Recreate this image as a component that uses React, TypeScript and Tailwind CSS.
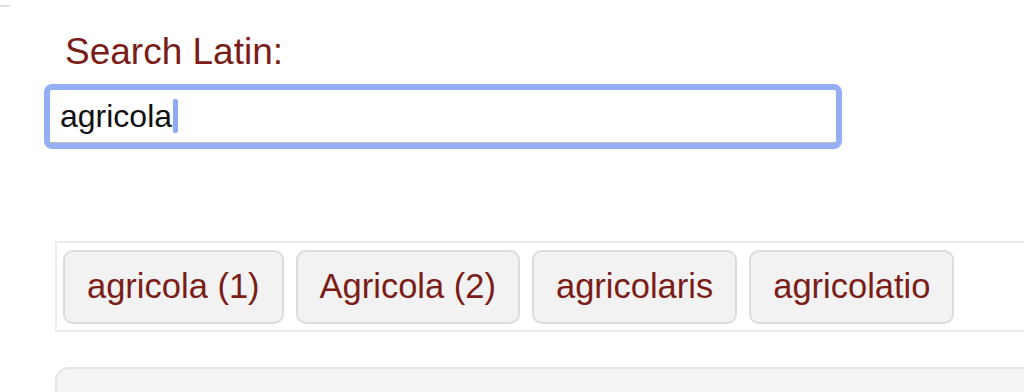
import React from "react";

export default function App(): JSX.Element {
  const words = ["agricola (1)", "Agricola (2)", "agricolaris", "agricolatio"];

  return (
    <div className="w-[1024px] h-[392px] overflow-hidden bg-white font-['Liberation_Sans',Arial,sans-serif]">
      <div className="w-[10px] h-[2px] mt-[5px] bg-[#dedede]" />

      <label className="block mt-[27px] pl-[65px] text-[37px] leading-[36px] text-[#7a1d18]">
        Search Latin:
      </label>

      <div className="mt-[14px] ml-[44px] w-[798px] h-[65px] border-[6px] border-[#94aff4] rounded-[8px] bg-white">
        <div className="flex items-center h-full pl-[10px] border-b border-[#b8b8b8] text-[32px] text-[#111111]">
          <span>agricola</span>
          <span className="ml-[1px] w-[5px] h-[34px] rounded-[2px] bg-[#8eaaf2]" />
        </div>
      </div>

      <div className="mt-[92px] ml-[55px] w-[1000px] border-2 border-[#ececec] pt-[7px] pb-[6px] pl-[6px] flex gap-[12px]">
        {words.map((w) => (
          <button
            key={w}
            className="h-[74px] px-[22px] border-2 border-[#dcdcdc] rounded-[10px] bg-[#f2f2f2] text-[34.5px] text-[#7a1d18]"
          >
            {w}
          </button>
        ))}
      </div>

      <div className="mt-[35px] ml-[55px] w-[1000px] h-[60px] rounded-[14px] border-2 border-[#e4e4e4] bg-[#f4f4f4]" />
    </div>
  );
}
